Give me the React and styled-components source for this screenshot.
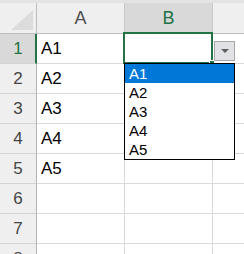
import React from "react";
import styled, { createGlobalStyle } from "styled-components";

const GlobalStyle = createGlobalStyle`
  body {
    margin: 0;
    background: #fff;
    font-family: "Liberation Sans", Arial, sans-serif;
  }
`;

const rows = ["A1", "A2", "A3", "A4", "A5", "", "", ""];
const options = ["A1", "A2", "A3", "A4", "A5"];

const App = () => {
  return (
    <Page>
      <GlobalStyle />
      <TopStrip />
      <Grid>
        <Corner>
          <svg width="22" height="20" viewBox="0 0 22 20">
            <polygon points="22,0 22,20 0,20" fill="#dcdcdc" />
          </svg>
        </Corner>
        <ColHeader>A</ColHeader>
        <ColHeader $selected>B</ColHeader>
        <ColHeader $last />
        {rows.map((value, i) => (
          <React.Fragment key={i}>
            <RowHeader $selected={i === 0}>{i + 1}</RowHeader>
            <Cell>{value}</Cell>
            {i === 0 ? (
              <Cell $active>
                <ActiveFrame>
                  <FillHandle />
                </ActiveFrame>
                <DropButton>
                  <svg width="8" height="4" viewBox="0 0 8 4">
                    <polygon points="0,0 8,0 4,4" fill="#5f5f5f" />
                  </svg>
                </DropButton>
                <OptionList>
                  {options.map((opt, j) => (
                    <OptionItem key={opt} $highlighted={j === 0}>
                      {opt}
                    </OptionItem>
                  ))}
                </OptionList>
              </Cell>
            ) : (
              <Cell />
            )}
            <Cell $last />
          </React.Fragment>
        ))}
      </Grid>
    </Page>
  );
};

export default App;

const Page = styled.div`
  width: 244px;
  height: 254px;
  overflow: hidden;
  background: #fff;
`;

const TopStrip = styled.div`
  height: 3px;
  background: #e3e3e3;
`;

const Grid = styled.div`
  display: grid;
  grid-template-columns: 37px 88px 88px 1fr;
  grid-template-rows: 31px repeat(8, 30px);
`;

const Corner = styled.div`
  box-sizing: border-box;
  background: #efefef;
  border-right: 1px solid #bdbdbd;
  border-bottom: 1px solid #bdbdbd;
  display: flex;
  align-items: flex-end;
  justify-content: flex-end;
  padding: 0 3px 3px 0;
`;

const ColHeader = styled.div`
  box-sizing: border-box;
  background: ${p => (p.$selected ? "#d9d9d9" : "#efefef")};
  color: ${p => (p.$selected ? "#217346" : "#505050")};
  border-right: ${p => (p.$last ? "none" : "1px solid #c8c8c8")};
  border-bottom: 1px solid #bdbdbd;
  display: flex;
  align-items: center;
  justify-content: center;
  font-size: 18px;
  padding-top: 1px;
`;

const RowHeader = styled.div`
  box-sizing: border-box;
  background: ${p => (p.$selected ? "#d9d9d9" : "#efefef")};
  color: ${p => (p.$selected ? "#217346" : "#454545")};
  border-right: ${p => (p.$selected ? "2px solid #217346" : "1px solid #b4b4b4")};
  border-bottom: 1px solid #d4d4d4;
  display: flex;
  align-items: center;
  justify-content: center;
  font-size: 17px;
  padding-left: ${p => (p.$selected ? "1px" : "0")};
`;

const Cell = styled.div`
  box-sizing: border-box;
  position: relative;
  border-right: ${p => (p.$last ? "none" : "1px solid #dadada")};
  border-bottom: 1px solid #dadada;
  display: flex;
  align-items: center;
  padding-left: 4px;
  font-size: 17px;
  color: #000;
  z-index: ${p => (p.$active ? 2 : "auto")};
`;

const ActiveFrame = styled.div`
  position: absolute;
  top: -2px;
  left: -2px;
  right: -1px;
  bottom: -1px;
  border: 2px solid #217346;
`;

const FillHandle = styled.div`
  position: absolute;
  right: -4px;
  bottom: -4px;
  width: 4px;
  height: 4px;
  background: #217346;
  border: 1px solid #fff;
`;

const DropButton = styled.div`
  position: absolute;
  left: 89px;
  top: 7px;
  width: 21px;
  height: 20px;
  box-sizing: border-box;
  background: #e1e2e5;
  border: 1px solid #a8a8a8;
  display: flex;
  align-items: center;
  justify-content: center;
`;

const OptionList = styled.div`
  position: absolute;
  left: -1px;
  top: 29px;
  width: 111px;
  height: 97px;
  box-sizing: border-box;
  background: #fff;
  border: 1px solid #000;
  display: flex;
  flex-direction: column;
  z-index: 3;
`;

const OptionItem = styled.div`
  height: 19px;
  line-height: 20px;
  padding-left: 4px;
  font-size: 15px;
  background: ${p => (p.$highlighted ? "#0078d7" : "transparent")};
  color: ${p => (p.$highlighted ? "#fff" : "#000")};
`;
